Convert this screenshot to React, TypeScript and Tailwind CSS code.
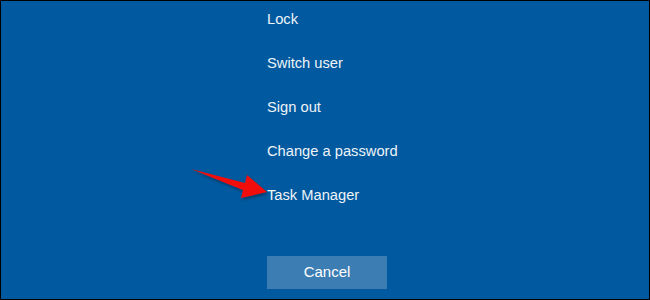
const items = ['Lock', 'Switch user', 'Sign out', 'Change a password', 'Task Manager']

function Arrow() {
  return (
    <svg
      className="absolute left-[186px] top-[164px]"
      width="86"
      height="40"
      viewBox="186 164 86 40"
    >
      <defs>
        <filter id="sh" x="-20%" y="-40%" width="140%" height="180%">
          <feDropShadow dx="1" dy="2" stdDeviation="1.5" floodColor="#000" floodOpacity="0.35" />
        </filter>
      </defs>
      <polygon
        points="190,168 244,182 246,174 266,191 240,197 242,189"
        fill="#f20d0d"
        filter="url(#sh)"
      />
    </svg>
  )
}

export default function App() {
  return (
    <div className="relative w-[650px] h-[300px] bg-[#015a9f] border border-black overflow-hidden font-['Liberation_Sans',Arial,sans-serif]">
      <div className="flex flex-col ml-[266px] pt-[7px]">
        <div className="flex flex-col gap-[22px]">
          {items.map((label) => (
            <div key={label} className="text-[14.7px] leading-[22px] text-[#eef3f8]">
              {label}
            </div>
          ))}
        </div>
        <button className="mt-[50px] w-[120px] h-[33px] bg-[#3c7db3] text-[15px] text-white flex items-center justify-center">
          Cancel
        </button>
      </div>
      <Arrow />
    </div>
  )
}
